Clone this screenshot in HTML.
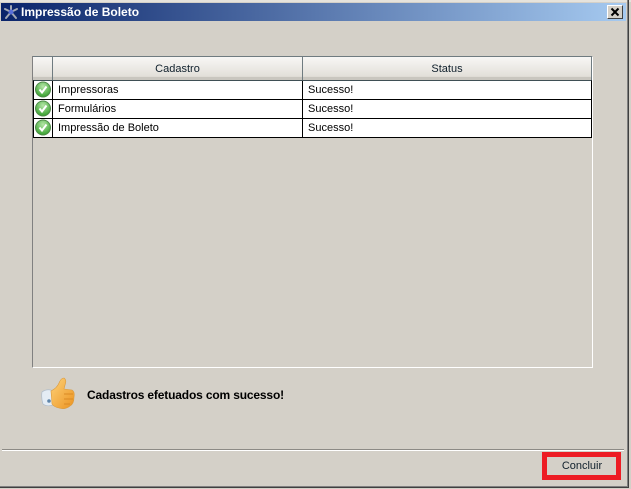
<!DOCTYPE html>
<html><head><meta charset="utf-8"><style>
html,body{margin:0;padding:0}
body{width:631px;height:489px;overflow:hidden;position:relative;background:#d4d0c8;font-family:"Liberation Sans",sans-serif;font-size:11px;color:#000}
.a{position:absolute}
.t{position:absolute;white-space:nowrap;line-height:14px}
.h{position:absolute;top:57px;height:23px;box-sizing:border-box;background:linear-gradient(#f8f7f5,#e2dfd9 85%,#c9c6bf 88%,#c9c6bf);text-align:center;line-height:24px;color:#10202c}
.r{position:absolute;left:33px;width:559px;height:20px;box-sizing:border-box;background:#fff;border-bottom:1px solid #000;border-left:1px solid #000;border-right:1px solid #000}
</style></head><body>
<div class="a" style="left:0;top:0;width:631px;height:2px;background:#e6e3dc"></div>
<div class="a" style="left:627px;top:0;width:1px;height:487px;background:#808080"></div>
<div class="a" style="left:628px;top:0;width:1px;height:488px;background:#404040"></div>
<div class="a" style="left:0;top:486px;width:628px;height:1px;background:#808080"></div>
<div class="a" style="left:0;top:487px;width:629px;height:1px;background:#404040"></div>
<div class="a" style="left:1px;top:3px;width:625px;height:18px;background:linear-gradient(90deg,#0a246a,#a6caf0)"></div>
<svg class="a" style="left:3px;top:4px" width="16" height="16" viewBox="0 0 16 16"><g stroke="#a4a9b4" stroke-width="2" stroke-linecap="round"><path d="M8 8V2M8 8L3 14M8 8L13 14M8 8L2 5M8 8L14 5"/></g><circle cx="8" cy="8" r="2.5" fill="#5a70d8"/></svg>
<div class="t" style="left:21px;top:5px;color:#fff;font-weight:bold;font-size:12px">Impressão de Boleto</div>
<div class="a" style="left:607px;top:5px;width:16px;height:14px;box-sizing:border-box;background:#d4d0c8;border:1px solid;border-color:#fff #404040 #404040 #fff"></div>
<svg class="a" style="left:607px;top:5px" width="16" height="14"><path d="M4.5 3.5L11.5 10.5M11.5 3.5L4.5 10.5" stroke="#000" stroke-width="2"/></svg>

<div class="a" style="left:32px;top:56px;width:561px;height:312px;box-sizing:border-box;background:#d4d0c8;border:1px solid;border-color:#808080 #fff #fff #808080"></div>
<div class="a" style="left:33px;top:56px;width:559px;height:1px;background:#6f7b80"></div>
<div class="h" style="left:33px;width:19px"></div>
<div class="a" style="left:52px;top:57px;width:1px;height:23px;background:#6f7b80"></div>
<div class="h" style="left:53px;width:249px">Cadastro</div>
<div class="a" style="left:302px;top:57px;width:1px;height:23px;background:#6f7b80"></div>
<div class="h" style="left:303px;width:288px">Status</div>
<div class="a" style="left:591px;top:57px;width:1px;height:23px;background:#6f7b80"></div>
<div class="a" style="left:33px;top:80px;width:559px;height:1px;background:#3f4f55"></div>

<div class="r" style="top:80px;border-top:1px solid #3f4f55"></div>
<div class="r" style="top:100px;height:19px"></div>
<div class="r" style="top:119px;height:19px"></div>
<div class="a" style="left:52px;top:81px;width:1px;height:56px;background:#000"></div>
<div class="a" style="left:302px;top:81px;width:1px;height:56px;background:#000"></div>

<svg class="a" style="left:34px;top:81px" width="18" height="57" viewBox="0 0 18 57">
<defs><radialGradient id="g" cx="50%" cy="30%" r="70%"><stop offset="0" stop-color="#b5e6a8"/><stop offset="1" stop-color="#35a02c"/></radialGradient></defs>
<g><circle cx="9" cy="8.5" r="7.5" fill="url(#g)" stroke="#4f8a4a"/><path d="M5.5 8.5L8 11.5L12.5 5.5" fill="none" stroke="#fff" stroke-width="2"/></g>
<g transform="translate(0 19)"><circle cx="9" cy="8.5" r="7.5" fill="url(#g)" stroke="#4f8a4a"/><path d="M5.5 8.5L8 11.5L12.5 5.5" fill="none" stroke="#fff" stroke-width="2"/></g>
<g transform="translate(0 38)"><circle cx="9" cy="8.5" r="7.5" fill="url(#g)" stroke="#4f8a4a"/><path d="M5.5 8.5L8 11.5L12.5 5.5" fill="none" stroke="#fff" stroke-width="2"/></g>
</svg>

<div class="t" style="left:58px;top:83px">Impressoras</div>
<div class="t" style="left:58px;top:102px">Formulários</div>
<div class="t" style="left:58px;top:121px">Impressão de Boleto</div>
<div class="t" style="left:308px;top:83px">Sucesso!</div>
<div class="t" style="left:308px;top:102px">Sucesso!</div>
<div class="t" style="left:308px;top:121px">Sucesso!</div>

<svg class="a" style="left:41px;top:377px" width="35" height="34" viewBox="0 0 35 34">
<defs><linearGradient id="o" x1="0" y1="0" x2="1" y2="1"><stop offset="0" stop-color="#fdd27a"/><stop offset="1" stop-color="#ec9320"/></linearGradient></defs>
<path d="M1 15Q5 12 10 13L12 28Q6 30 2 27Q0 21 1 15Z" fill="#e4ecf4" stroke="#aebccb" stroke-width=".7"/>
<circle cx="8" cy="24" r="1.8" fill="#5f85aa"/>
<path d="M10 14Q16 11 18 6Q20 1 23 1Q26 3 24 8L23 12L31 13Q34 15 33 20Q33 27 29 29Q24 33 18 31Q13 30 11 27Z" fill="url(#o)" stroke="#d99a3f" stroke-width=".6"/>
<path d="M23 17H32M23 22H32M23 27H29" stroke="#d98a25" stroke-width="1" fill="none"/>
</svg>
<div class="t" style="left:87px;top:388px;font-weight:bold;font-size:12px;letter-spacing:-.16px">Cadastros efetuados com sucesso!</div>

<div class="a" style="left:2px;top:449px;width:622px;height:1px;background:#8c8a85"></div>
<div class="a" style="left:2px;top:450px;width:622px;height:1px;background:#fff"></div>

<div class="a" style="left:547px;top:457px;width:69px;height:20px;background:#d4d0c8;border-bottom:1px solid #7f7d78"></div>
<div class="t" style="left:547px;top:459px;width:70px;text-align:center;color:#10202c">Concluir</div>
<div class="a" style="left:542px;top:452px;width:79px;height:28px;box-sizing:border-box;border:5px solid #ed1c24"></div>
</body></html>
